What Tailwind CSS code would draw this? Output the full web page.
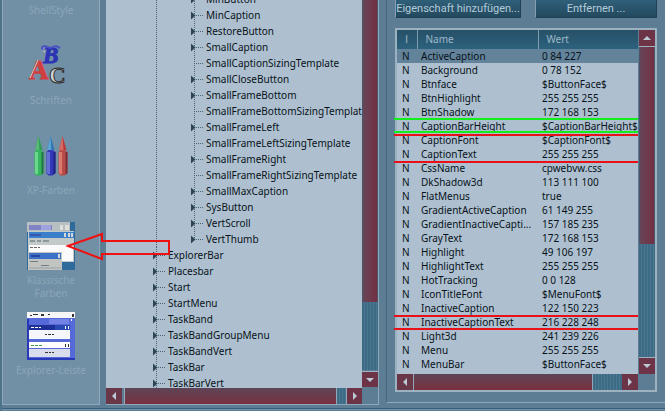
<!DOCTYPE html>
<html lang="de">
<head>
<meta charset="utf-8">
<title>Klassische Farben</title>
<script src="https://cdn.jsdelivr.net/npm/@tailwindcss/browser@4"></script>
</head>
<body class="relative flex h-screen min-h-[411px] flex-col overflow-hidden bg-[#5d7d94] font-['Noto_Sans',sans-serif] text-[10px] text-[#08121a]">
  <main class="flex min-h-0 flex-1 border-l-2 border-[#4f728b]">

    <!-- sidebar -->
    <nav class="mr-1.5 flex w-[98px] shrink-0 flex-col items-center border border-t-0 border-[#8fa8ba] bg-[#7290a5] text-center leading-[13px] text-[#8ba5b8]">
      <a href="#" class="block h-[42px] pt-1">ShellStyle</a>
      <a href="#" class="flex h-[90px] flex-col items-center">
        <svg class="mb-1 size-12" viewBox="0 0 48 48" font-family="Liberation Serif, serif" font-weight="bold">
          <text x="16" y="21" font-size="23" font-style="italic" fill="#2c33b4" stroke="#2c33b4" stroke-width="1">B</text>
          <text x="2" y="37" font-size="27" fill="#cf3f3f" stroke="#cf3f3f" stroke-width="1">A</text>
          <text x="22" y="41" font-size="23" fill="#d0d4d4" stroke="#2b2b2b" stroke-width="1">C</text>
          <path d="M3 36L11 18M17 5l-2 3 3 2" fill="none" stroke="#d9c8cc" stroke-width="1"/>
          <path d="M16 8q-3-3 2-4l5 2 6-2 4 2" fill="none" stroke="#4a52c4" stroke-width="2"/>
        </svg>
        Schriften
      </a>
      <a href="#" class="flex h-[90px] flex-col items-center">
        <svg class="mb-1 size-12" viewBox="0 0 48 48">
          <path d="M11.500 4l4 14H8z" fill="#2f9d55"/>
          <path d="M11.500 4l1 14H8z" fill="#58b877"/>
          <path d="M7.500 20l2-2h4l3 2v21l-3 2.500h-4l-2-2z" fill="#35b55e"/>
          <path d="M8 20h3v22H9l-1-1z" fill="#6bd88b"/>
          <path d="M14.500 20h2v21l-2 2z" fill="#23763f"/>
          <path d="M23.500 4l4 14H20z" fill="#2c72b4"/>
          <path d="M23.500 4l1 14H20z" fill="#5aa3d3"/>
          <path d="M19.500 20l2-2h4l3 2v21l-3 2.500h-4l-2-2z" fill="#3238b8"/>
          <path d="M20 20h3v22h-2l-1-1z" fill="#666fd6"/>
          <path d="M26.500 20h2v21l-2 2z" fill="#20237f"/>
          <path d="M35.500 4l4 14H32z" fill="#b83838"/>
          <path d="M35.500 4l1 14H32z" fill="#d86a64"/>
          <path d="M31.500 20l2-2h4l3 2v21l-3 2.500h-4l-2-2z" fill="#b84a48"/>
          <path d="M32 20h3v22h-2l-1-1z" fill="#dd7a70"/>
          <path d="M38.500 20h2v21l-2 2z" fill="#7c3038"/>
        </svg>
        XP-Farben
      </a>
      <a href="#" class="flex h-[90px] flex-col items-center">
        <svg class="mb-1 size-12" viewBox="0 0 48 48" shape-rendering="crispEdges">
          <path fill="#2f6c9c" d="M0 0h48v48H0z"/>
          <path fill="#b8bfc0" d="M0 0h43v10H0z"/>
          <path fill="#8183c6" d="M2 3h23v5H2z"/>
          <path fill="#9fa2dc" d="M14 3h10v5H14z"/>
          <path fill="#dfe0da" d="M33 3h3v5h-3zM38 3h4v5h-4z"/>
          <path fill="#c3c8c9" d="M1 9h46v31H1z"/>
          <path fill="#3b7fcb" d="M2 10h45v6H2z"/>
          <path fill="#3556ae" d="M3 12h11v2H3z"/>
          <path fill="#d6d8d5" d="M37 11h2v4h-2zM41 11h2v4h-2zM44 11h2v4h-2z"/>
          <path fill="#8d969b" d="M3 18h5v2H3zM10 18h4v2h-4zM16 18h6v2h-6z"/>
          <path fill="#fafafa" d="M2 23h44v16H2z"/>
          <path fill="#666" d="M3 25h3v1H3zM7 25h3v1H7zM11 25h2v1h-2z"/>
          <path fill="#c2c4c2" d="M1 30h34v18H1z"/>
          <path fill="#3b72c8" d="M2 31h32v6H2z"/>
          <path fill="#27469e" d="M4 33h9v2H4z"/>
          <path fill="#d6d8d5" d="M31 32h2v4h-2z"/>
          <path fill="#747c84" d="M3 39h8v1H3zM14 43h8v1h-8z"/>
          <path fill="#aeb2b2" d="M2 45h32v2H2z"/>
        </svg>
        Klassische<br>Farben
      </a>
      <a href="#" class="flex h-[90px] flex-col items-center whitespace-nowrap">
        <svg class="mb-1 size-12" viewBox="0 0 48 48" shape-rendering="crispEdges">
          <path fill="#5669d8" d="M0 0h48v48H0z"/>
          <path fill="#2938b8" d="M0 7h2v40H0zM0 46h48v2H0z"/>
          <path fill="#7382e6" d="M22 7h20v5H22z"/>
          <path fill="#f6f6f6" d="M0 0h48v6H0z"/>
          <path fill="#333" d="M3 3h2v1H3zM6 2h5v1H6zM14 2h3v2h-3zM21 2h2v1h-2zM45 2h2v3h-2z"/>
          <path fill="#1f2f98" d="M2 13h26v5H2z"/>
          <path fill="#2b49b2" d="M28 13h15v5H28z"/>
          <path fill="#fff" d="M4 15h3v1H4zM8 15h3v1H8zM12 15h2v1h-2zM38 14h1v3h-1zM41 14h1v3h-1zM44 7h1v2h-1z"/>
          <path fill="#f5f6fa" d="M2 18h41v9H2z"/>
          <path fill="#333" d="M18 22h2v1h-2zM21 22h3v1h-3zM25 22h2v1h-2z"/>
          <path fill="#fff" d="M2 30h41v6H2z"/>
          <path fill="#3f9b4d" d="M4 33h3v1H4zM8 33h3v1H8zM12 33h3v1h-3z"/>
          <path fill="#333" d="M38 32h1v3h-1zM41 32h1v3h-1z"/>
          <path fill="#d9dcea" d="M2 37h41v8H2z"/>
          <path fill="#333" d="M18 40h3v1h-3zM22 40h2v1h-2zM25 40h2v1h-2z"/>
        </svg>
        Explorer-Leiste
      </a>
    </nav>

    <!-- tree -->
    <section class="mr-[7px] flex w-[273px] shrink-0 flex-col border-r border-b border-[#8fa8ba]">
      <div class="flex min-h-0 flex-1">
        <div class="min-w-0 flex-1 overflow-hidden bg-[#aec0cf]">
          <ul id="tree" class="-mt-[9px] pl-[47px] leading-4 whitespace-nowrap"></ul>
        </div>
        <div class="flex w-4 flex-col">
          <div class="h-[302px] border-x border-[#4b5468] bg-linear-to-r from-[#664657] to-[#722f44]"></div>
          <div class="mb-px flex-1 bg-[repeating-linear-gradient(90deg,#3d6a84_0_2px,#4b7891_2px_3px)]"></div>
          <button aria-label="Nach unten" class="mb-px flex h-4 items-center justify-center border-t border-[#9fb3c2] bg-[#6d3346]">
            <svg class="h-1 w-2" viewBox="0 0 8 4"><path d="M0 0h8L4 4z" fill="#bccbd6"/></svg>
          </button>
        </div>
      </div>
      <div class="flex h-4">
        <button aria-label="Nach links" class="flex w-4 items-center justify-center bg-[#6a3748]">
          <svg class="h-2 w-1" viewBox="0 0 4 8"><path d="M4 0v8L0 4z" fill="#bccbd6"/></svg>
        </button>
        <div class="ml-0.5 flex-1 border-l border-[#93a9b8] bg-linear-to-b from-[#5d4456] to-[#79303f]"></div>
        <div class="w-2.5 border-l border-[#93a9b8] bg-[repeating-linear-gradient(90deg,#3d6a84_0_2px,#4b7891_2px_3px)]"></div>
        <button aria-label="Nach rechts" class="flex w-4 items-center justify-center border-l border-[#93a9b8] bg-[#6d3346]">
          <svg class="h-2 w-1" viewBox="0 0 4 8"><path d="M0 0v8l4-4z" fill="#bccbd6"/></svg>
        </button>
        <div class="w-4"></div>
      </div>
    </section>

    <!-- properties -->
    <section class="mb-0.5 flex min-w-0 flex-1 flex-col border-b border-l border-b-[#8fa8ba] border-l-[#456880] px-2 pb-2.5">
      <div class="grid h-[18px] grid-cols-[126px_1fr] gap-3.5 font-['Roboto',sans-serif] text-[11px] leading-4 text-[#b3cad9]">
        <button class="border border-t-0 border-r-[#1f4356] border-b-[#1f4356] border-l-[#86a0b2] bg-linear-to-b from-[#2f6079] to-[#24495e] whitespace-nowrap">Eigenschaft hinzufügen...</button>
        <button class="border border-t-0 border-r-[#1f4356] border-b-[#1f4356] border-l-[#86a0b2] bg-linear-to-b from-[#2f6079] to-[#24495e] whitespace-nowrap">Entfernen ...</button>
      </div>

      <div class="relative mt-2.5 flex min-h-0 flex-1 flex-col border-2 border-[#9db2c1]">
        <div class="flex min-h-0 flex-1">
          <div class="min-w-0 flex-1 overflow-hidden bg-[#aec0cf]">
            <table class="w-full table-fixed border-collapse text-left whitespace-nowrap">
              <colgroup><col class="w-5"><col class="w-[121px]"><col></colgroup>
              <thead class="bg-linear-to-b from-[#275067] to-[#2c627e] text-[#9db8c9]">
                <tr class="h-[19px]">
                  <th class="border-r border-[#7e9bae] p-0 text-center font-['Liberation_Sans',sans-serif] font-normal">I</th>
                  <th class="border-r border-[#7e9bae] p-0 pl-2 font-normal">Name</th>
                  <th class="p-0 pl-2 font-normal">Wert</th>
                </tr>
              </thead>
              <tbody id="rows" class="leading-[14px]"></tbody>
            </table>
          </div>
          <div class="ml-px flex w-4 flex-col bg-[#9db2c1]">
            <button aria-label="Nach oben" class="flex h-4 items-center justify-center bg-[#6d3346]">
              <svg class="h-1 w-2" viewBox="0 0 8 4"><path d="M0 4h8L4 0z" fill="#bccbd6"/></svg>
            </button>
            <div class="mt-px h-[197px] border-x border-[#4b5468] bg-linear-to-r from-[#664657] to-[#722f44]"></div>
            <div class="mb-px flex-1 bg-[repeating-linear-gradient(90deg,#3d6a84_0_2px,#4b7891_2px_3px)]"></div>
            <button aria-label="Nach unten" class="flex h-4 items-center justify-center bg-[#6d3346]">
              <svg class="h-1 w-2" viewBox="0 0 8 4"><path d="M0 0h8L4 4z" fill="#bccbd6"/></svg>
            </button>
          </div>
        </div>
        <div class="flex h-4 bg-[#5d7d94]">
          <button aria-label="Nach links" class="flex w-4 items-center justify-center bg-[#6a3748]">
            <svg class="h-2 w-1" viewBox="0 0 4 8"><path d="M4 0v8L0 4z" fill="#bccbd6"/></svg>
          </button>
          <div class="flex-1 border-l border-[#93a9b8] bg-linear-to-b from-[#5d4456] to-[#79303f]"></div>
          <div class="w-[30px] border-l border-[#93a9b8] bg-[repeating-linear-gradient(90deg,#3d6a84_0_2px,#4b7891_2px_3px)]"></div>
          <button aria-label="Nach rechts" class="flex w-4 items-center justify-center bg-[#6d3346]">
            <svg class="h-2 w-1" viewBox="0 0 4 8"><path d="M0 0v8l4-4z" fill="#bccbd6"/></svg>
          </button>
          <div class="w-[17px]"></div>
        </div>

        <!-- highlighted rows -->
        <div class="absolute top-[88px] right-[17px] -left-[3px] h-[15px] border-y-2 border-[#12ee1c]"></div>
        <div class="absolute top-[104px] right-[17px] -left-[3px] h-[29px] border-y-2 border-[#ea1018]"></div>
        <div class="absolute top-[285px] right-[17px] -left-[3px] h-[15px] border-y-2 border-[#ea1018]"></div>
      </div>
    </section>
  </main>

  <footer class="h-[6px] border-l-2 border-[#4f728b]">
    <div class="mt-[3px] h-0.5 border-t border-b border-t-[#3a5f78] border-b-[#6f93aa]"></div>
  </footer>

  <!-- arrow to the selected icon -->
  <svg class="pointer-events-none absolute top-[230px] left-[64px] h-8 w-28" viewBox="0 0 112 32">
    <path d="M4 16L38 4v7h67v13H38v5z" fill="none" stroke="#ee1111" stroke-width="2"/>
  </svg>

  <script>
    // [name, has children]
    const frames = [
      ['MinButton', 1], ['MinCaption', 1], ['RestoreButton', 1], ['SmallCaption', 1],
      ['SmallCaptionSizingTemplate', 0], ['SmallCloseButton', 1], ['SmallFrameBottom', 1],
      ['SmallFrameBottomSizingTemplate', 0], ['SmallFrameLeft', 1], ['SmallFrameLeftSizingTemplate', 0],
      ['SmallFrameRight', 1], ['SmallFrameRightSizingTemplate', 0], ['SmallMaxCaption', 1],
      ['SysButton', 1], ['VertScroll', 1], ['VertThumb', 1]
    ];
    const roots = ['ExplorerBar', 'Placesbar', 'Start', 'StartMenu', 'TaskBand', 'TaskBandGroupMenu', 'TaskBandVert', 'TaskBar', 'TaskBarVert'];

    function node(name, open, last) {
      return `<li class="flex h-4 items-center">
        <svg class="h-4 w-[15px] shrink-0" viewBox="0 0 15 16">
          <path d="M3.5 0V${last ? 8 : 16}M5 8.500H13" stroke="#4d6478" stroke-dasharray="1 1" fill="none"/>
          ${open ? '<path d="M0 4.500v8l4.500-4z" fill="#2c4557"/>' : ''}
        </svg>${name}</li>`;
    }

    document.getElementById('tree').innerHTML =
      `<li><ul class="ml-[3px] border-l border-dotted border-[#4d6478] pl-[34px]">
        ${frames.map((f, i) => node(f[0], f[1], i === frames.length - 1)).join('')}
      </ul></li>` + roots.map(r => node(r, 1, false)).join('');

    const props = [
      ['ActiveCaption', '0 84 227'], ['Background', '0 78 152'], ['Btnface', '$ButtonFace$'],
      ['BtnHighlight', '255 255 255'], ['BtnShadow', '172 168 153'], ['CaptionBarHeight', '$CaptionBarHeight$'],
      ['CaptionFont', '$CaptionFont$'], ['CaptionText', '255 255 255'], ['CssName', 'cpwebvw.css'],
      ['DkShadow3d', '113 111 100'], ['FlatMenus', 'true'], ['GradientActiveCaption', '61 149 255'],
      ['GradientInactiveCapti...', '157 185 235'], ['GrayText', '172 168 153'], ['Highlight', '49 106 197'],
      ['HighlightText', '255 255 255'], ['HotTracking', '0 0 128'], ['IconTitleFont', '$MenuFont$'],
      ['InactiveCaption', '122 150 223'], ['InactiveCaptionText', '216 228 248'], ['Light3d', '241 239 226'],
      ['Menu', '255 255 255'], ['MenuBar', '$ButtonFace$'], ['MenuFont', '$MenuFont$']
    ];
    document.getElementById('rows').innerHTML = props.map((p, i) =>
      `<tr class="${i === 0 ? 'h-3.5 bg-[#62839a]' : 'h-3.5'}">
        <td class="p-0 pl-[5px]">N</td><td class="p-0 pl-1">${p[0]}</td><td class="p-0 pl-1">${p[1]}</td>
      </tr>`).join('');
  </script>
</body>
</html>
